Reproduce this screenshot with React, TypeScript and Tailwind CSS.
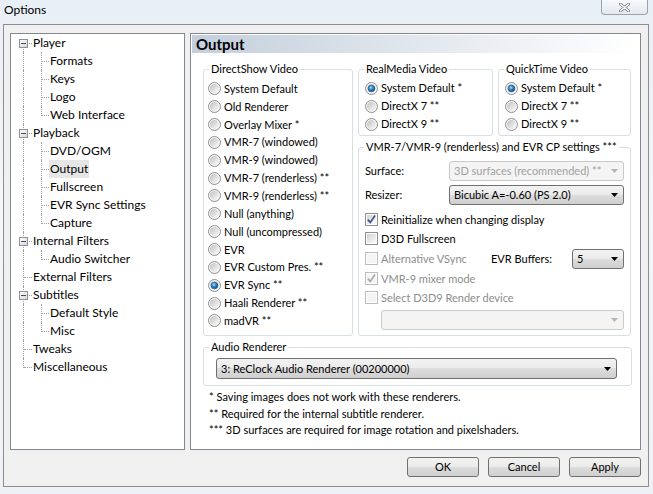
import React from "react";

function RadioIcon({ checked }: { checked?: boolean }) {
  return (
    <svg width="13" height="13" viewBox="0 0 13 13" className="shrink-0">
      <circle cx="6.5" cy="6.5" r="6" fill="#f6f6f6" stroke="#8e8f8f" />
      <circle cx="6.5" cy="6.5" r="4.6" fill="url(#rbg)" />
      {checked && (
        <circle cx="6.5" cy="6.5" r="3.3" fill="url(#rdot)" stroke="#1b4f7f" strokeWidth="0.7" />
      )}
    </svg>
  );
}

function CheckIcon({ checked, disabled }: { checked?: boolean; disabled?: boolean }) {
  return (
    <svg width="13" height="13" viewBox="0 0 13 13" className="shrink-0">
      <rect x="0.5" y="0.5" width="12" height="12" fill="#ffffff" stroke={disabled ? "#bcbcbc" : "#8e8f8f"} />
      <rect x="2" y="2" width="9" height="9" fill={disabled ? "#f4f4f4" : "url(#cbg)"} />
      {checked && (
        <path
          d="M2.8 6.6 L5.3 9.4 L10 2.6"
          stroke={disabled ? "#a9a9a9" : "#3f5489"}
          strokeWidth="1.7"
          fill="none"
        />
      )}
    </svg>
  );
}

function Radio({ label, checked, h }: { label: string; checked?: boolean; h: string }) {
  return (
    <div className={"flex items-center " + h}>
      <RadioIcon checked={checked} />
      <span className="ml-[3px] whitespace-nowrap">{label}</span>
    </div>
  );
}

function Arrow({ disabled }: { disabled?: boolean }) {
  return (
    <svg width="7" height="4" viewBox="0 0 7 4" className="shrink-0">
      <path d="M0 0 H7 L3.5 4 Z" fill={disabled ? "#b4b4b4" : "#000000"} />
    </svg>
  );
}

function Combo({ text, disabled, className }: { text: string; disabled?: boolean; className: string }) {
  return (
    <div
      className={
        "flex items-center justify-between pl-[4px] pr-[5px] rounded-[3px] border " +
        (disabled
          ? "border-[#c9c9c9] bg-[#f4f4f4] text-[#a0a0a0] "
          : "border-[#707070] bg-[linear-gradient(#f2f2f2,#ebebeb_50%,#dddddd_50%,#cfcfcf)] ") +
        className
      }
    >
      <span className="whitespace-nowrap">{text}</span>
      <Arrow disabled={disabled} />
    </div>
  );
}

function Group({ label, className, children }: { label: string; className: string; children?: React.ReactNode }) {
  return (
    <div className={"relative border border-[#d5dfe5] rounded-[3px] " + className}>
      <span className="absolute left-[5px] top-[-8px] bg-white px-[2px] leading-[14px] whitespace-nowrap">
        {label}
      </span>
      {children}
    </div>
  );
}

function Check({ label, checked, disabled }: { label: string; checked?: boolean; disabled?: boolean }) {
  return (
    <div className="flex items-center">
      <CheckIcon checked={checked} disabled={disabled} />
      <span className={"ml-[3px] whitespace-nowrap " + (disabled ? "text-[#8d8d8d]" : "")}>{label}</span>
    </div>
  );
}

type TreeRow = {
  label: string;
  child?: boolean;
  expander?: boolean;
  first?: boolean;
  lastRoot?: boolean;
  lastChild?: boolean;
  selected?: boolean;
};

const rows: TreeRow[] = [
  { label: "Player", expander: true, first: true },
  { label: "Formats", child: true },
  { label: "Keys", child: true },
  { label: "Logo", child: true },
  { label: "Web Interface", child: true, lastChild: true },
  { label: "Playback", expander: true },
  { label: "DVD/OGM", child: true },
  { label: "Output", child: true, selected: true },
  { label: "Fullscreen", child: true },
  { label: "EVR Sync Settings", child: true },
  { label: "Capture", child: true, lastChild: true },
  { label: "Internal Filters", expander: true },
  { label: "Audio Switcher", child: true, lastChild: true },
  { label: "External Filters" },
  { label: "Subtitles", expander: true },
  { label: "Default Style", child: true },
  { label: "Misc", child: true, lastChild: true },
  { label: "Tweaks" },
  { label: "Miscellaneous", lastRoot: true },
];

function Tree() {
  return (
    <div className="w-[175px] h-[417px] border border-[#828790] bg-white shrink-0">
      {rows.map((r) => (
        <div key={r.label} className="flex h-[18px]">
          <div className="relative w-[21px] h-full shrink-0">
            {r.child ? (
              <div className="absolute left-[12px] top-0 bottom-0 border-l border-dotted border-[#a0a0a0]" />
            ) : r.first ? (
              <div className="absolute left-[12px] top-[9px] bottom-0 border-l border-dotted border-[#a0a0a0]" />
            ) : r.lastRoot ? (
              <div className="absolute left-[12px] top-0 h-[10px] border-l border-dotted border-[#a0a0a0]" />
            ) : (
              <div className="absolute left-[12px] top-0 bottom-0 border-l border-dotted border-[#a0a0a0]" />
            )}
            {!r.child && (
              <div className="absolute left-[13px] top-[9px] w-[8px] border-t border-dotted border-[#a0a0a0]" />
            )}
            {r.expander && (
              <div className="absolute left-[8px] top-[5px] w-[9px] h-[9px] border border-[#919191] bg-[linear-gradient(135deg,#ffffff,#d6d6d6)] flex items-center justify-center">
                <div className="w-[5px] h-[1px] bg-[#3d4f70]" />
              </div>
            )}
          </div>
          {r.child && (
            <div className="relative w-[17px] h-full shrink-0">
              <div
                className={
                  "absolute left-[9px] top-0 border-l border-dotted border-[#a0a0a0] " +
                  (r.lastChild ? "h-[10px]" : "bottom-0")
                }
              />
              <div className="absolute left-[10px] top-[9px] w-[7px] border-t border-dotted border-[#a0a0a0]" />
            </div>
          )}
          <span
            className={
              "h-full flex items-center px-[1px] whitespace-nowrap " + (r.selected ? "bg-[#e6e6e6]" : "")
            }
          >
            {r.label}
          </span>
        </div>
      ))}
    </div>
  );
}

function Button({ label }: { label: string }) {
  return (
    <div className="w-[72px] h-[20px] rounded-[3px] border border-[#707070] bg-[linear-gradient(#f2f2f2,#ebebeb_50%,#dddddd_50%,#cfcfcf)] flex items-center justify-center">
      {label}
    </div>
  );
}

export default function App() {
  const ds = [
    "System Default",
    "Old Renderer",
    "Overlay Mixer *",
    "VMR-7 (windowed)",
    "VMR-9 (windowed)",
    "VMR-7 (renderless) **",
    "VMR-9 (renderless) **",
    "Null (anything)",
    "Null (uncompressed)",
    "EVR",
    "EVR Custom Pres. **",
    "EVR Sync **",
    "Haali Renderer **",
    "madVR **",
  ];
  return (
    <div className="relative w-[653px] h-[494px] overflow-hidden bg-[linear-gradient(180deg,#e9eff6,#f3f6fa_40%,#eef2f7)] font-['Lato',sans-serif] text-[12px] leading-[16px] text-black">
      <svg width="0" height="0" className="absolute">
        <defs>
          <linearGradient id="rbg" x1="0" y1="0" x2="1" y2="1">
            <stop offset="0" stopColor="#bfbfbf" />
            <stop offset="1" stopColor="#fdfdfd" />
          </linearGradient>
          <radialGradient id="rdot" cx="0.4" cy="0.35" r="0.75">
            <stop offset="0" stopColor="#9ee0ff" />
            <stop offset="0.45" stopColor="#2f86c8" />
            <stop offset="1" stopColor="#0b3c74" />
          </radialGradient>
          <linearGradient id="cbg" x1="0" y1="0" x2="1" y2="1">
            <stop offset="0" stopColor="#d2d2d2" />
            <stop offset="1" stopColor="#fbfbfb" />
          </linearGradient>
        </defs>
      </svg>

      <div className="h-[24px] flex items-start justify-between">
        <span className="ml-[4px] mt-[2px]">Options</span>
        <div className="mr-[5px] w-[47px] h-[15px] rounded-b-[4px] border border-t-0 border-[#9aa3ad] bg-[linear-gradient(#f7f9fb,#e3e9ef)] flex items-center justify-center">
          <svg width="11" height="9" viewBox="0 0 11 9">
            <path d="M1.5 1.2 L9.5 7.8 M9.5 1.2 L1.5 7.8" stroke="#7d848c" strokeWidth="3" strokeLinecap="round" />
            <path d="M1.5 1.2 L9.5 7.8 M9.5 1.2 L1.5 7.8" stroke="#ffffff" strokeWidth="1.4" strokeLinecap="round" />
          </svg>
        </div>
      </div>

      <div className="ml-[3px] w-[646px] h-[463px] border border-[#8e8e8e] bg-[#f0f0f0] flex flex-col">
        <div className="flex pt-[8px] pl-[6px] gap-[5px]">
          <Tree />
          <div className="w-[451px] h-[417px] border border-[#828790] bg-white flex flex-col shrink-0 text-[11px]">
            <div className="mt-[1px] ml-[1px] w-[445px] h-[18px] bg-[linear-gradient(90deg,#c3cfdc,#ffffff)] flex items-center pl-[4px] font-bold text-[15px]">
              Output
            </div>
            <div className="flex pl-[12px] mt-[16px] gap-[5px]">
              <Group label="DirectShow Video" className="w-[150px] h-[267px] pt-[10px] pl-[4px]">
                {ds.map((d) => (
                  <Radio key={d} label={d} checked={d === "EVR Sync **"} h="h-[17.85px]" />
                ))}
              </Group>
              <div className="flex flex-col w-[273px]">
                <div className="flex gap-[5px]">
                  <Group label="RealMedia Video" className="w-[135px] h-[67px] pt-[9px] pl-[6px]">
                    <Radio label="System Default *" checked h="h-[18px]" />
                    <Radio label="DirectX 7 **" h="h-[18px]" />
                    <Radio label="DirectX 9 **" h="h-[18px]" />
                  </Group>
                  <Group label="QuickTime Video" className="w-[133px] h-[67px] pt-[9px] pl-[6px]">
                    <Radio label="System Default *" checked h="h-[18px]" />
                    <Radio label="DirectX 7 **" h="h-[18px]" />
                    <Radio label="DirectX 9 **" h="h-[18px]" />
                  </Group>
                </div>
                <Group
                  label="VMR-7/VMR-9 (renderless) and EVR CP settings ***"
                  className="mt-[11px] w-[273px] h-[189px] pt-[13px] pl-[6px]"
                >
                  <div className="flex items-center h-[20px]">
                    <span className="w-[84px]">Surface:</span>
                    <Combo text="3D surfaces (recommended) **" disabled className="w-[175px] h-[20px]" />
                  </div>
                  <div className="flex items-center h-[20px] mt-[4px]">
                    <span className="w-[84px]">Resizer:</span>
                    <Combo text="Bicubic A=-0.60 (PS 2.0)" className="w-[175px] h-[20px]" />
                  </div>
                  <div className="mt-[5px] flex flex-col">
                    <div className="h-[19px] flex items-center">
                      <Check label="Reinitialize when changing display" checked />
                    </div>
                    <div className="h-[19px] flex items-center">
                      <Check label="D3D Fullscreen" />
                    </div>
                    <div className="h-[21px] flex items-center">
                      <div className="w-[126px]">
                        <Check label="Alternative VSync" disabled />
                      </div>
                      <span className="w-[81px]">EVR Buffers:</span>
                      <Combo text="5" className="w-[52px] h-[20px]" />
                    </div>
                    <div className="h-[19px] flex items-center">
                      <Check label="VMR-9 mixer mode" checked disabled />
                    </div>
                    <div className="h-[19px] flex items-center">
                      <Check label="Select D3D9 Render device" disabled />
                    </div>
                  </div>
                  <Combo text="" disabled className="mt-[3px] ml-[16px] w-[243px] h-[20px]" />
                </Group>
              </div>
            </div>
            <Group label="Audio Renderer" className="ml-[12px] mt-[11px] w-[429px] h-[39px] pt-[10px] pl-[12px]">
              <Combo text="3: ReClock Audio Renderer (00200000)" className="w-[401px] h-[21px]" />
            </Group>
            <div className="ml-[18px] mt-[3px] leading-[16.5px] flex flex-col">
              <span>* Saving images does not work with these renderers.</span>
              <span>** Required for the internal subtitle renderer.</span>
              <span>*** 3D surfaces are required for image rotation and pixelshaders.</span>
            </div>
          </div>
        </div>
        <div className="flex justify-end gap-[9px] mt-[7px] pr-[7px] text-[11px]">
          <Button label="OK" />
          <Button label="Cancel" />
          <Button label="Apply" />
        </div>
      </div>
    </div>
  );
}
